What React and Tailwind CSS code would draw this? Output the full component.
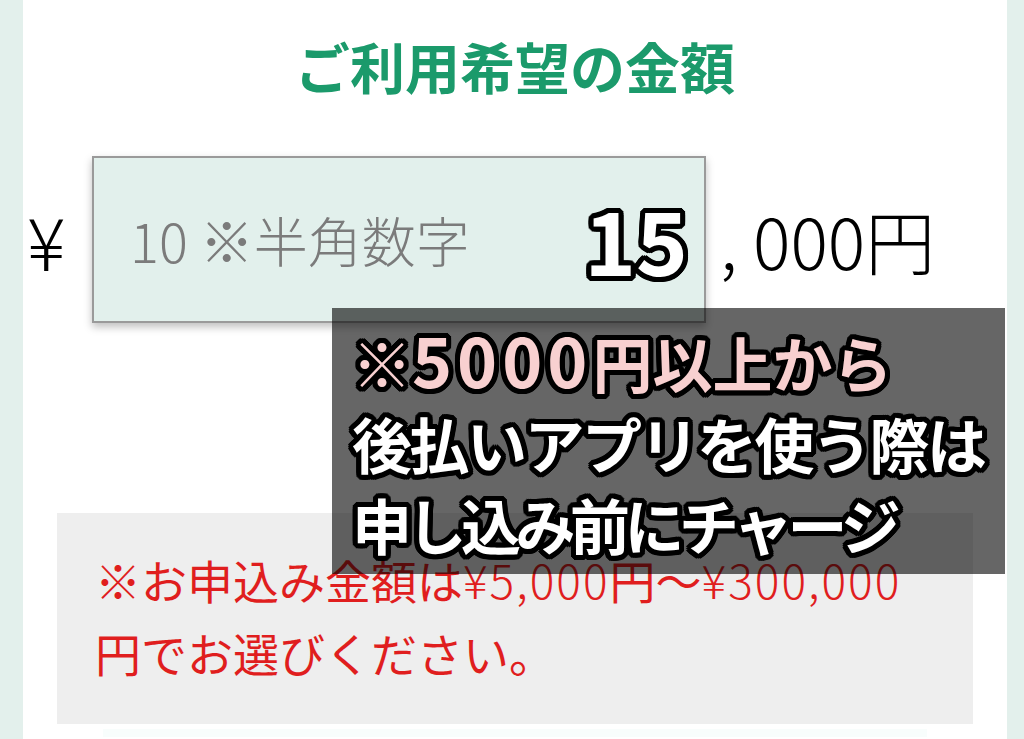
const jp = { fontFamily: '"Noto Sans CJK JP", "Noto Sans", sans-serif' };

const outline =
  "[text-shadow:5px_0_0_#000,-5px_0_0_#000,0_5px_0_#000,0_-5px_0_#000,4px_3px_0_#000,-4px_3px_0_#000,4px_-3px_0_#000,-4px_-3px_0_#000,3px_4px_0_#000,-3px_4px_0_#000,3px_-4px_0_#000,-3px_-4px_0_#000,2px_5px_0_#000,-2px_5px_0_#000,5px_2px_0_#000,-5px_2px_0_#000,2px_-5px_0_#000,-2px_-5px_0_#000,5px_-2px_0_#000,-5px_-2px_0_#000]";

export default function App() {
  return (
    <div className="min-h-screen h-[739px] overflow-hidden bg-[#e3f0ec] pl-[23px] pr-[17px]" style={jp}>
      <div className="relative h-full bg-white">
        <h1 className="pt-[38px] text-center text-[55px] font-bold leading-none text-[#1b9a6b]">
          ご利用希望の金額
        </h1>

        <div className="mt-[63px] flex items-center">
          <span className="w-[69px] pl-[4px] text-[72px] font-extralight leading-none text-black">¥</span>
          <div className="flex h-[167px] w-[614px] items-center justify-between border-2 border-[#9a9a9a] bg-[#e2f0ec] pl-[36px] pr-[16px] shadow-[0_4px_8px_rgba(0,0,0,0.25)]">
            <span className="text-[54px] font-light text-[#7b7b7b]">
              <span className="font-extralight">10</span> ※半角数字
            </span>
            <span className={`mt-[-4px] text-[88px] font-bold leading-none text-white ${outline}`}>15</span>
          </div>
          <span className="ml-[14px] text-[70px] font-extralight leading-none text-black">, 000円</span>
        </div>

        <div className="mt-[190px] mr-[34px] ml-[34px] h-[211px] bg-[#eeeeee] px-[38px] pt-[30px] text-[46px] leading-[73px] text-[#e01e1e]">
          <p className="whitespace-nowrap">
            ※お申込み金額は<span className="font-light tracking-[2px]">¥5,000</span>円〜<span className="font-light tracking-[2px]">¥300,000</span>
            <br />
            円でお選びください。
          </p>
        </div>

        <div className="mx-[80px] mt-[5px] h-[8px] bg-[#f8fdfc]" />

        <div className="absolute left-[309px] top-[308px] h-[266px] w-[673px] bg-black/60 pl-[20px] pt-[10px]">
          <p className={`whitespace-nowrap text-[60px] font-bold leading-[81px] text-[#f8d0d0] ${outline}`}>
            ※<span className="text-[68px] tracking-[5px]">5000</span>円以上から
          </p>
          <p className={`whitespace-nowrap text-[60px] font-bold leading-[81px] tracking-[-2.5px] text-white ${outline}`}>
            後払いアプリを使う際は
          </p>
          <p className={`whitespace-nowrap text-[60px] font-bold leading-[81px] tracking-[-5.5px] text-white ${outline}`}>
            申し込み前にチャージ
          </p>
        </div>
      </div>
    </div>
  );
}
